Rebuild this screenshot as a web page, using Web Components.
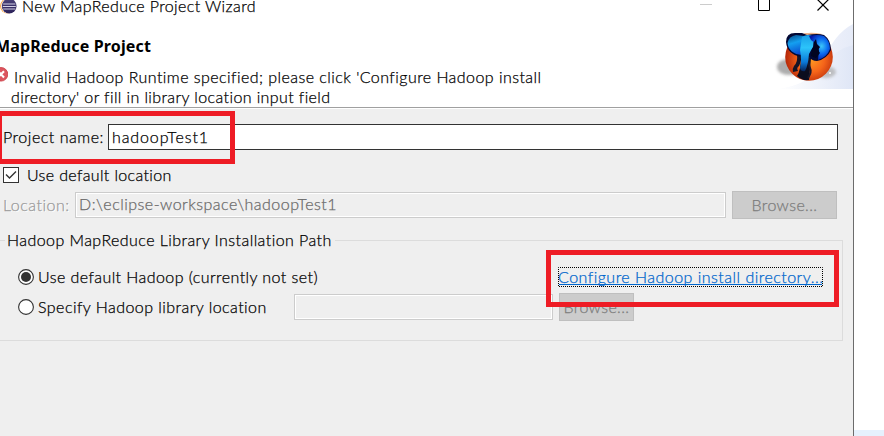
<!DOCTYPE html>
<html lang="en">
<head>
<meta charset="utf-8">
<title>New MapReduce Project Wizard</title>
<style>
html,body{margin:0;height:100%;overflow:hidden;background:#fff}
body{font:300 16px Lato,"Open Sans",sans-serif;color:#000;-webkit-text-stroke:.25px}
</style>
</head>
<body>
<project-wizard></project-wizard>
<script>
const define = (name, html, after) => customElements.define(name, class extends HTMLElement {
  connectedCallback() {
    if (this.shadowRoot) return;
    const t = document.createElement('template');
    t.innerHTML = html;
    this.attachShadow({mode: 'open'}).append(t.content.cloneNode(true));
    if (after) after.call(this, this.shadowRoot);
  }
});

/* A line of text spaced out to the width given in its "w" attribute. */
define('ui-text', `<style>:host{display:block;white-space:pre;line-height:20px;flex:none}span{display:inline-block}</style><span></span>`, function (r) {
  const s = r.querySelector('span');
  s.textContent = this.getAttribute('text');
  const w = +this.getAttribute('w');
  if (w) {
    s.style.letterSpacing = ((w - s.getBoundingClientRect().width) / s.textContent.length) + 'px';
    this.style.width = w + 'px';
  }
});

define('ui-field', `<style>
:host{display:flex;box-sizing:border-box;height:26px;flex:none;border:1px solid #333;background:#fff;padding:2px 0 0 3px}
:host([disabled]){border-color:#ccc;background:#efefef;box-shadow:inset 0 0 0 1px #fff;color:#6a6a6a}
</style><slot></slot>`);

define('ui-button', `<style>
:host{display:flex;box-sizing:border-box;height:28px;flex:none;border:1px solid #bfbfbf;background:#ccc;color:#7c7c7c;justify-content:center;padding-top:3px}
</style><slot></slot>`);

define('ui-check', `<style>:host{display:block;width:16px;height:16px;flex:none}svg{display:block}</style>
<svg width="16" height="16"><rect x=".5" y=".5" width="15" height="15" fill="#fff" stroke="#333"/><path d="M3 7.5 6.5 11 13 4.5" fill="none" stroke="#333" stroke-width="1.4"/></svg>`);

define('ui-radio', `<style>:host{display:block;width:16px;height:16px;flex:none}svg{display:block}circle+circle{display:none}:host([checked]) circle+circle{display:block}</style>
<svg width="16" height="16"><circle cx="8" cy="8" r="7.4" fill="#fff" stroke="#333" stroke-width="1.1"/><circle cx="8" cy="8" r="5" fill="#333"/></svg>`);

define('eclipse-icon', `<style>:host{display:block;width:17px;height:16px;flex:none}svg{display:block}</style>
<svg width="17" height="16"><defs><linearGradient id="e" x2="0" y2="1"><stop stop-color="#4b4379"/><stop offset="1" stop-color="#2b2159"/></linearGradient></defs>
<circle cx="7.5" cy="8" r="7.4" fill="#f5942a"/><circle cx="8.4" cy="8" r="7.4" fill="#fff"/><circle cx="9.2" cy="8" r="7.4" fill="url(#e)"/><path d="M3.2 6h12.2M2.8 8.5h13M3.2 11h12.2" stroke="#d3d1e6" stroke-width="1.2"/></svg>`);

define('error-icon', `<style>:host{display:block;width:8px;height:15px;flex:none}svg{display:block}</style>
<svg width="8" height="15"><circle cx="1" cy="7.3" r="6.8" fill="#dc5660" stroke="#c93b42" stroke-width=".8"/><path d="M-2 4.2 4 10.4M4 4.2-2 10.4" stroke="#fff" stroke-width="2.1"/></svg>`);

define('window-controls', `<style>:host{display:block;width:130px;height:14px;flex:none}svg{display:block}</style>
<svg width="130" height="14"><path d="M0 4.5h12" stroke="#ccc"/><path d="M58.5-4v14.5h11V-4" fill="none" stroke="#000"/><path d="M117.5-.5l11 11m0-11l-11 11" fill="none" stroke="#000" stroke-width="1.2"/></svg>`);

define('hadoop-banner', `<style>:host{display:block;width:83px;height:66px;flex:none}svg{display:block}</style>
<svg width="83" height="66" viewBox="770 23 83 66">
<defs>
<linearGradient id="a"><stop stop-color="#fff"/><stop offset="1" stop-color="#dfe6f6"/></linearGradient>
<linearGradient id="f"><stop stop-color="#fafbfe"/><stop offset="1" stop-color="#e6ebf8"/></linearGradient>
<radialGradient id="o" cx=".55" cy=".55" r=".55"><stop stop-color="#ff9b22"/><stop offset=".5" stop-color="#f5651a"/><stop offset="1" stop-color="#b52708"/></radialGradient>
<linearGradient id="b" x2=".3" y2="1"><stop stop-color="#064a86"/><stop offset=".45" stop-color="#14a0f0"/><stop offset="1" stop-color="#0a4fd0"/></linearGradient>
<linearGradient id="t" x2="0" y2="1"><stop stop-color="#1a9fe8"/><stop offset=".35" stop-color="#2cc4fa"/><stop offset=".75" stop-color="#0a78d8"/><stop offset="1" stop-color="#06255c"/></linearGradient>
<radialGradient id="r" cx=".6" cy=".45" r=".6"><stop stop-color="#3cc6f8"/><stop offset=".5" stop-color="#0a6cf0"/><stop offset="1" stop-color="#0418a8"/></radialGradient>
<filter id="s" x="-.3" y="-.5" width="1.6" height="2"><feGaussianBlur stdDeviation="1.8"/></filter>
</defs>
<path d="M824 60Q834 34 853 24V89H780Q812 84 824 60Z" fill="url(#f)"/>
<path d="M780 89Q812 84 825 64Q836 49 853 45V89Z" fill="url(#a)"/>
<ellipse cx="789" cy="67" rx="12" ry="8" fill="#999" opacity=".8" filter="url(#s)"/>
<ellipse cx="826" cy="72" rx="10" ry="6" fill="#aaa" opacity=".7" filter="url(#s)"/>
<circle cx="809" cy="57" r="23.8" fill="url(#o)"/>
<path d="M800 35Q808 31 822 34L814 38Z" fill="#edb289"/>
<path d="M797 55Q798 62 794 66Q792 69 793 72L798 71Q796 68 799 66Q802 60 801 54Z" fill="#171426"/>
<path d="M801 56Q801 70 797 76Q802 81 809 80L811 58Z" fill="#0b0d1e"/>
<path d="M809 55Q808 64 810 68Q812 72 808 78" fill="none" stroke="#16182c" stroke-width="2"/>
<path d="M786 42Q786 33 795 33H802L807 35Q818 33 824 35Q831 40 831 50Q827 59 817 61Q812 61 809 57L801 57Q787 54 786 42Z" fill="#020834"/>
<path d="M787.500 43Q789 36 796 35L804 36L807 45L802 55Q789 54 787.500 43Z" fill="url(#b)"/>
<path d="M802 37Q808 33 814 37L813 47Q811 50 809 54Q808 66 805 71Q801 72 800 68Q802 60 800 50Z" fill="url(#t)"/>
<path d="M809 36Q818 34 824 36Q830 41 830 49Q827 57 818 60L819 50L817 45L811 40Z" fill="url(#r)"/>
<path d="M814 42l2-3 1 5 3 3-2 3 2 3-4 5-5-2 1-7 2-3Z" fill="#010420"/>
<circle cx="830" cy="73" r="1" fill="#fff"/>
</svg>`);

/* Titled frame whose caption interrupts the top rule. */
define('ui-group', `<style>
:host{display:block;box-sizing:border-box;height:110px;width:843px}
header{display:flex;align-items:center;height:20px}
header i{height:1px;background:#dcdcdc;flex:1}
header i:first-child{flex:none;width:5px;margin-right:2px}
header i:last-child{margin-left:3px}
main{box-sizing:border-box;margin-top:-10px;height:101px;border:solid #dcdcdc;border-width:0 1px 1px 0;padding-top:27px}
</style><header><i></i><slot name="caption"></slot><i></i></header><main><slot></slot></main>`);

define('ui-link', `<style>
:host{display:block;position:relative;box-sizing:border-box;width:265px;height:20px;flex:none;color:#0066cc;line-height:20px}
svg{position:absolute;left:0;top:0}
</style><slot></slot><svg width="265" height="20"><path d="M1 17.5h263" stroke="#0066cc"/><rect x=".5" y=".5" width="264" height="19" fill="none" stroke="#000" stroke-dasharray="1 1" stroke-dashoffset=".5"/></svg>`);

define('mark-box', `<style>:host{display:block;position:absolute;box-sizing:border-box;border:5px solid #ee1c25}</style>`);

define('project-wizard', `<style>
:host{display:grid;grid-template-columns:854px 1fr;height:436px;position:relative;overflow:hidden}
.win{box-sizing:border-box;background:#efefef;border-right:1px solid #6c6c6c;overflow:hidden;height:436px}
aside{background:linear-gradient(#fff 430px,#e6f1fd 430px)}
.title{display:flex;height:23px;background:#fff;align-items:flex-start;line-height:12px}
.title eclipse-icon{margin-top:-2px}
.title ui-text{margin:0 0 0 5px;line-height:12px}
.title window-controls{margin-left:auto;margin-right:23px}
.head{display:flex;background:#fff;height:84px;border-bottom:1px solid #a0a0a0;box-shadow:0 1px #fff;justify-content:space-between}
.head h1{margin:13px 0 0 -5px;font:bold 16px "Noto Sans","Open Sans",sans-serif;color:#000;height:20px;-webkit-text-stroke:0}
.msg{display:flex;margin-top:11px}
.msg error-icon{margin:0 6px 0 0}
.row{display:flex}
.name{margin-top:16px}
.name>ui-text{margin:3px 0 0 3px}
.check{margin:17px 0 0 3px}
.check ui-text{margin:-2px 0 0 8px}
.loc{margin-top:6px;height:28px}
.loc>ui-text{margin:4px 0 0 3px;color:#9a9a9a;text-shadow:1px 1px #fff}
.loc ui-field{margin:1px 6px 0 5px;padding-top:1px}
ui-group{margin-top:11px}
.r1{height:26px;padding-left:18px}
.r2{height:28px;padding-left:18px}
.r1 ui-radio{margin-top:2px}.r2 ui-radio{margin-top:6px}
.r1>ui-text{margin:0 0 0 4px}.r2>ui-text{margin:4px 0 0 4px}
.r1 ui-link{margin-left:240px}
.r2 ui-field{margin:1px 6px 0 27px}
</style>
<div class="win">
 <div class="title"><eclipse-icon></eclipse-icon><ui-text text="New MapReduce Project Wizard" w="234"></ui-text><window-controls></window-controls></div>
 <div class="head"><div><h1><ui-text text="MapReduce Project" w="156"></ui-text></h1>
  <div class="msg"><error-icon></error-icon><div><ui-text text="Invalid Hadoop Runtime specified; please click 'Configure Hadoop install" w="527"></ui-text><ui-text style="margin-left:-3px" text="directory' or fill in library location input field" w="319"></ui-text></div></div></div>
  <hadoop-banner></hadoop-banner></div>
 <div class="row name"><ui-text text="Project name:" w="101"></ui-text><ui-field style="width:730px;margin-left:4px"><ui-text text="hadoopTest1" w="97"></ui-text></ui-field></div>
 <div class="row check"><ui-check></ui-check><ui-text text="Use default location" w="145"></ui-text></div>
 <div class="row loc"><ui-text text="Location:" w="67"></ui-text><ui-field disabled style="width:651px"><ui-text text="D:\\eclipse-workspace\\hadoopTest1" w="258"></ui-text></ui-field><ui-button style="width:105px"><ui-text text="Browse..." w="66"></ui-text></ui-button></div>
 <ui-group><ui-text slot="caption" text="Hadoop MapReduce Library Installation Path" w="325"></ui-text>
  <div class="row r1"><ui-radio checked></ui-radio><ui-text text="Use default Hadoop (currently not set)" w="280"></ui-text><ui-link><ui-text text="Configure Hadoop install directory..." w="265"></ui-text></ui-link></div>
  <div class="row r2"><ui-radio></ui-radio><ui-text text="Specify Hadoop library location" w="229"></ui-text><ui-field disabled style="width:259px"></ui-field><ui-button style="width:75px"><ui-text text="Browse..." w="66"></ui-text></ui-button></div>
 </ui-group>
</div>
<aside></aside>
<mark-box style="left:-3px;top:111px;width:238px;height:53px"></mark-box>
<mark-box style="left:546px;top:250px;width:293px;height:57px"></mark-box>`);
</script>
</body>
</html>
